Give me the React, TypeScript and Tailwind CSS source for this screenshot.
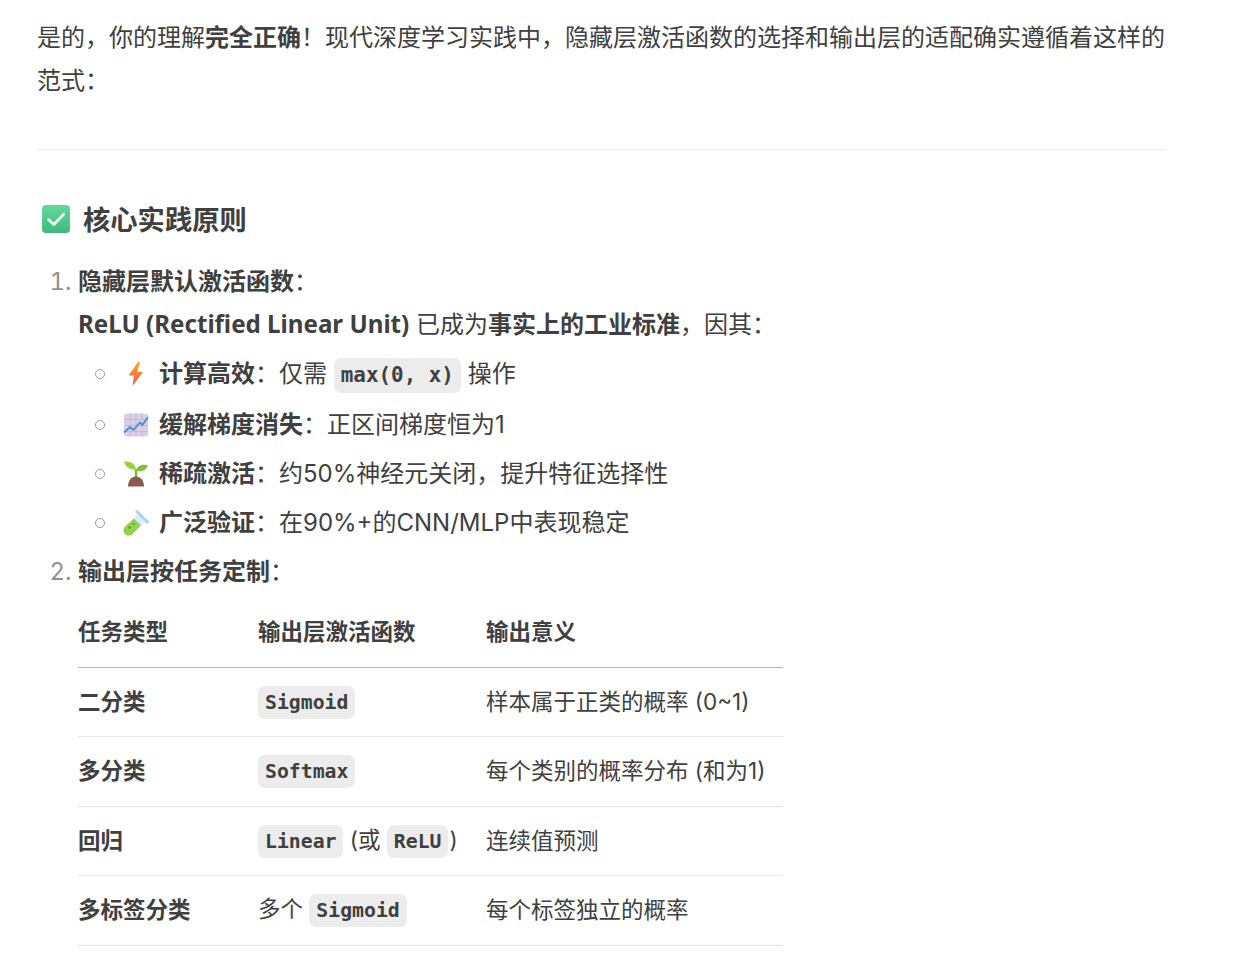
import React from "react";

const Code = ({ children, big }: { children: React.ReactNode; big?: boolean }) => (
  <code
    className={
      big
        ? "inline-block rounded-[7px] bg-[#ececec] px-[7px] align-middle font-['DejaVu_Sans_Mono',monospace] text-[20.9px] leading-[35px] font-bold text-[#404040]"
        : "inline-block rounded-[7px] bg-[#ececec] px-[7px] align-middle font-['DejaVu_Sans_Mono',monospace] text-[19.8px] leading-[33px] font-bold text-[#404040]"
    }
  >
    {children}
  </code>
);

const Check = () => (
  <svg viewBox="0 0 28 28" className="h-[30px] w-[30px] shrink-0">
    <defs>
      <linearGradient id="chk" x1="0" y1="0" x2="0" y2="1">
        <stop offset="0" stopColor="#63d99b" />
        <stop offset="1" stopColor="#3fb97f" />
      </linearGradient>
    </defs>
    <rect x="1" y="1" width="26" height="26" rx="3.5" fill="url(#chk)" />
    <path d="M7 14.5l5 4.6L21.2 9.6" fill="none" stroke="#f2f6f3" strokeWidth="2.6" strokeLinecap="round" strokeLinejoin="round" />
  </svg>
);

const Bolt = () => (
  <svg viewBox="0 0 26 26" className="mr-[10px] inline-block h-[26px] w-[26px] align-[-5px]">
    <defs>
      <linearGradient id="blt" x1="0" y1="0" x2="0" y2="1">
        <stop offset="0" stopColor="#ffa726" />
        <stop offset="1" stopColor="#f4574a" />
      </linearGradient>
    </defs>
    <path d="M15 1L5.500 14.500h5.500L9.500 25 20 11h-5.800L17 1z" fill="url(#blt)" />
  </svg>
);

const Chart = () => (
  <svg viewBox="0 0 26 26" className="mr-[10px] inline-block h-[26px] w-[26px] align-[-5px]">
    <rect x="1" y="1.500" width="24" height="23" rx="2.500" fill="#d9cfe6" />
    <path d="M1 7.500h24M1 13.500h24M1 19.500h24M7 1.500v23M13 1.500v23M19 1.500v23" stroke="#c2b4d3" strokeWidth="0.8" />
    <path d="M1 20.500l6-5.500 3.500 3L17 10.500l2.500 2.500L25 5" fill="none" stroke="#3f8fdc" strokeWidth="1.800" strokeLinejoin="round" />
  </svg>
);

const Sprout = () => (
  <svg viewBox="0 0 26 26" className="mr-[10px] inline-block h-[26px] w-[26px] align-[-5px]">
    <path d="M13 17V8" stroke="#7cb53a" strokeWidth="2.400" />
    <path d="M1 .5c6-.5 11 1.500 12 8C7 9 2.500 6.500 1 .5z" fill="#9ad13f" />
    <path d="M25 4.500c-4.500-1.500-10-.5-12 4.500 3.500 2.500 9.500 1.500 12-4.500z" fill="#7fc137" />
    <path d="M5 25.500c0-6 3.500-10 8-10s8 4 8 10z" fill="#8a5a4a" />
  </svg>
);

const Tube = () => (
  <svg viewBox="0 0 26 26" className="mr-[10px] inline-block h-[26px] w-[26px] align-[-5px]">
    <path d="M15.500 3l7.500 7.500L9.500 24c-2 2-5.500 2-7.500 0s-2-5.500 0-7.500z" fill="#dcedf7" />
    <path d="M11 8.500l7 7L9.500 24c-2 2-5.500 2-7.500 0s-2-5.500 0-7.500z" fill="#8fd44a" />
    <path d="M14 1.500l10.500 10.500" stroke="#a9d6ee" strokeWidth="3" strokeLinecap="round" />
    <circle cx="6.500" cy="17.500" r="1.200" fill="#4f9a2c" />
    <circle cx="10.500" cy="14" r="1" fill="#4f9a2c" />
  </svg>
);

const Label = ({ children }: { children: React.ReactNode }) => (
  <strong className="font-['Noto_Sans','Noto_Sans_CJK_SC',sans-serif] font-bold">{children}</strong>
);

const Sub = ({ children, first }: { children: React.ReactNode; first?: boolean }) => (
  <li className={first ? "mb-[2px] flex items-center" : "flex items-center"}>
    <span className="mr-[18px] h-[10px] w-[10px] shrink-0 rounded-full border-[1.5px] border-[#9a9a9a]" />
    <div>{children}</div>
  </li>
);

const rows: [string, React.ReactNode, string][] = [
  ["二分类", <Code>Sigmoid</Code>, "样本属于正类的概率 (0~1)"],
  ["多分类", <Code>Softmax</Code>, "每个类别的概率分布 (和为1)"],
  [
    "回归",
    <>
      <Code>Linear</Code> (或 <Code>ReLU</Code>
      <span className="ml-[1px]">)</span>
    </>,
    "连续值预测",
  ],
  [
    "多标签分类",
    <>
      多个 <Code>Sigmoid</Code>
    </>,
    "每个标签独立的概率",
  ],
];

export default function App() {
  return (
    <div className="min-h-[969px] overflow-hidden bg-white pl-[37px] font-['Inter','Noto_Sans_CJK_SC',sans-serif] text-[24px] leading-[43px] text-[#404040]">
      <div className="w-[1129px]">
        <p className="pt-[15px]">
          是的，你的理解<Label>完全正确</Label>！现代深度学习实践中，隐藏层激活函数的选择和输出层的适配确实遵循着这样的范式：
        </p>
        <hr className="mt-[47px] border-0 border-t border-[#ececec]" />
        <h3 className="mt-[49px] flex h-[40px] items-center gap-[12px] pl-[4px] font-['Noto_Sans','Noto_Sans_CJK_SC',sans-serif] text-[27.3px] font-bold">
          <Check />
          核心实践原则
        </h3>
        <ol className="mt-[21px] list-decimal pl-[41px] leading-[42px] marker:text-[#8f8f8f]">
          <li>
            <Label>隐藏层默认激活函数</Label>：
            <div>
              <strong className="font-['Noto_Sans',sans-serif] text-[24.15px] font-bold">ReLU (Rectified Linear Unit)</strong> 已成为<Label>事实上的工业标准</Label>，因其：
            </div>
            <ul className="mt-[6px] flex flex-col gap-[6px] pl-[17px]">
              <Sub first>
                <Bolt />
                <Label>计算高效</Label>：仅需 <Code big>max(0, x)</Code> 操作
              </Sub>
              <Sub>
                <Chart />
                <Label>缓解梯度消失</Label>：正区间梯度恒为1
              </Sub>
              <Sub>
                <Sprout />
                <Label>稀疏激活</Label>：约50%神经元关闭，提升特征选择性
              </Sub>
              <Sub>
                <Tube />
                <Label>广泛验证</Label>：在90%+的CNN/MLP中表现稳定
              </Sub>
            </ul>
          </li>
          <li className="mt-[6px]">
            <Label>输出层按任务定制</Label>：
            <table className="mt-[4px] w-[705px] table-fixed border-collapse text-left text-[22.5px] leading-[32px]">
              <colgroup>
                <col className="w-[180px]" />
                <col className="w-[228px]" />
                <col />
              </colgroup>
              <thead>
                <tr className="h-[70px] border-b border-[#b5b5b5]">
                  <th className="font-['Noto_Sans','Noto_Sans_CJK_SC',sans-serif] font-bold">任务类型</th>
                  <th className="font-['Noto_Sans','Noto_Sans_CJK_SC',sans-serif] font-bold">输出层激活函数</th>
                  <th className="font-['Noto_Sans','Noto_Sans_CJK_SC',sans-serif] font-bold">输出意义</th>
                </tr>
              </thead>
              <tbody>
                {rows.map(([a, b, c]) => (
                  <tr key={a} className="h-[69.5px] border-b border-[#e5e5e5]">
                    <td className="font-['Noto_Sans','Noto_Sans_CJK_SC',sans-serif] font-bold">{a}</td>
                    <td>{b}</td>
                    <td>{c}</td>
                  </tr>
                ))}
              </tbody>
            </table>
          </li>
        </ol>
      </div>
    </div>
  );
}
